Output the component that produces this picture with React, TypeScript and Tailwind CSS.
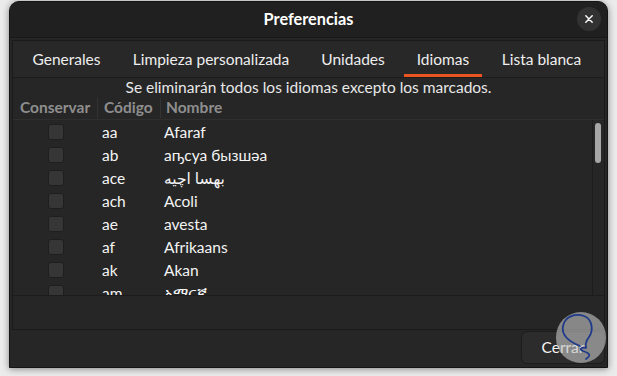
import React from "react";

const rows: [string, string][] = [
  ["aa", "Afaraf"],
  ["ab", "аҧсуа бызшәа"],
  ["ace", "بهسا اچيه"],
  ["ach", "Acoli"],
  ["ae", "avesta"],
  ["af", "Afrikaans"],
  ["ak", "Akan"],
  ["am", "አማርኛ"],
];

const tabs: { label: string; w: string; active?: boolean }[] = [
  { label: "Generales", w: "w-[91px]" },
  { label: "Limpieza personalizada", w: "w-[182px]" },
  { label: "Unidades", w: "w-[86px]" },
  { label: "Idiomas", w: "w-[78px]", active: true },
  { label: "Lista blanca", w: "w-[103px]" },
];

export default function App() {
  return (
    <div className="relative w-[617px] h-[376px] overflow-hidden bg-[#ebebeb] pl-[9px] pt-[1px] font-['Lato','Noto_Sans','DejaVu_Sans',sans-serif] text-[15.5px]">
      <div className="w-[599px] h-[367px] rounded-t-[10px] border border-[#141414] bg-[#262626] shadow-[0_1px_7px_rgba(0,0,0,0.45)] flex flex-col overflow-hidden">
        {/* Header bar */}
        <div className="relative h-[36px] shrink-0 bg-[#202020] border-b border-[#181818] flex items-center justify-center">
          <span className="font-bold text-white text-[16.3px] leading-none">Preferencias</span>
          <div className="absolute right-[6px] top-[5px] w-[24px] h-[24px] rounded-full bg-[#323232] flex items-center justify-center">
            <svg width="8" height="8" viewBox="0 0 8 8">
              <path d="M0.8 0.8 L7.2 7.2 M7.2 0.8 L0.8 7.2" stroke="#ffffff" strokeWidth="1.4" strokeLinecap="round" />
            </svg>
          </div>
        </div>

        {/* Notebook */}
        <div className="mx-[2px] mt-[2px] h-[290px] shrink-0 border border-[#1a1a1a] bg-[#262626] flex flex-col">
          {/* Tabs */}
          <div className="h-[37px] shrink-0 border-b border-[#1c1c1c] bg-[#282828] flex pl-[8px] gap-x-[8px]">
            {tabs.map((t) => (
              <div
                key={t.label}
                className={
                  "relative h-full flex items-center justify-center text-[#eeeeee] whitespace-nowrap " + t.w
                }
              >
                <span className="pt-[1px]">{t.label}</span>
                {t.active && (
                  <div className="absolute left-0 right-0 bottom-0 h-[3px] bg-[#e95420]" />
                )}
              </div>
            ))}
          </div>

          {/* Info text */}
          <div className="h-[19px] shrink-0 flex items-center justify-center text-[#e8e8e8] leading-none pt-[1px] whitespace-nowrap">
            Se eliminarán todos los idiomas excepto los marcados.
          </div>

          {/* Column header */}
          <div className="h-[23px] shrink-0 flex items-stretch border-b border-[#2f2f2f] text-[#8e8e8e] font-bold">
            <div className="w-[84px] pl-[7px] flex items-center">Conservar</div>
            <div className="w-px my-[1px] bg-[#333333]" />
            <div className="w-[62px] pl-[6px] flex items-center">Código</div>
            <div className="w-px my-[1px] bg-[#333333]" />
            <div className="flex-1 pl-[5px] flex items-center">Nombre</div>
          </div>

          {/* List + scrollbar */}
          <div className="h-[176px] shrink-0 flex border-b border-[#1c1c1c]">
            <div className="flex-1 overflow-hidden">
              {rows.map(([code, name]) => (
                <div key={code} className="h-[23px] flex items-center text-[#f4f4f4]">
                  <div className="w-[85px] flex justify-center pl-[1px]">
                    <div className="w-[16px] h-[16px] rounded-[3px] bg-[#363636] border border-[#1e1e1e]" />
                  </div>
                  <div className="w-[63px] pl-[4px] leading-none pt-[2px]">{code}</div>
                  <div className="flex-1 pl-[3px] leading-none pt-[2px] font-['Lato','DejaVu_Sans','Noto_Sans',sans-serif]">
                    {name}
                  </div>
                </div>
              ))}
            </div>
            <div className="w-[12px] shrink-0 border-l border-[#1c1c1c] pl-[2px] pt-[3px]">
              <div className="w-[6px] h-[40px] rounded-full bg-[#a6a6a6]" />
            </div>
          </div>
        </div>

        {/* Footer */}
        <div className="flex justify-end mr-[2px] mt-[1px]">
          <div className="w-[84px] h-[33px] rounded-[6px] bg-[#2c2c2c] border border-[#1c1c1c] flex items-center justify-center text-[#f4f4f4]">
            Cerrar
          </div>
        </div>
      </div>

      {/* Watermark */}
      <div className="absolute left-[556px] top-[312px] w-[50px] h-[51px] rounded-full bg-[rgba(195,195,195,0.62)]">
        <svg width="50" height="51" viewBox="0 0 50 51" className="absolute left-0 top-0">
          <path
            d="M24 34 C14 30, 5 24, 7 14 C9 4, 20 1, 28 4 C36 7, 38 18, 33 25 C30 29, 29 32, 30 36 C26 35, 22 37, 27 39 C33 41, 36 43, 30 47"
            fill="none"
            stroke="#1f3a8a"
            strokeWidth="1.8"
            strokeLinecap="round"
            strokeLinejoin="round"
          />
        </svg>
      </div>
    </div>
  );
}
